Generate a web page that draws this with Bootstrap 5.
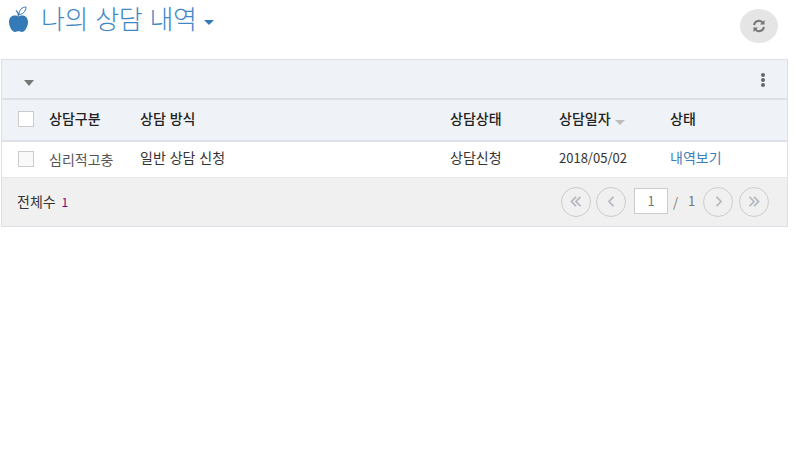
<!DOCTYPE html>
<html lang="ko">
<head>
<meta charset="UTF-8" />
<meta name="viewport" content="width=device-width, initial-scale=1.0" />
<title>나의 상담 내역</title>
<link href="https://cdn.jsdelivr.net/npm/bootstrap@5.3.3/dist/css/bootstrap.min.css" rel="stylesheet" />
<style>
body { background: #fff; font-family: "Noto Sans CJK KR", "Noto Sans", sans-serif; font-size: 14px; color: #333; }
.page-wrap { width: 788px; padding-left: 1px; }
.title-bar { height: 59px; padding-left: 8px; }
.title-text { font-size: 26px; font-weight: 300; letter-spacing: -.3px; color: #3f88c5; line-height: 36px; margin: 0 0 0 13px; }
.title-caret { width: 0; height: 0; border: 5px solid transparent; border-top-color: #337ab7; border-bottom: 0; margin: 20px 0 0 7px; }
.apple-icon { margin-top: 6px; }
.reload-btn { width: 38px; height: 34px; border-radius: 50%; background: #e5e5e5; border: 0; margin: 9px 10px 0 0; padding: 0; }
.list-box { border: 1px solid #dde1e7; }
.tool-bar { height: 40px; background: #eff3f8; border-bottom: 2px solid #dde1e7; padding: 0 21px; }
.tool-caret { width: 0; height: 0; border: 5px solid transparent; border-top: 6px solid #777; border-bottom: 0; margin-top: 8px; margin-left: 1px; }
.dots-menu { margin-right: 1px; margin-top: 2px; }
.dots-menu i { display: block; width: 4px; height: 4px; border-radius: 50%; background: #666; margin-bottom: 1px; }
.data-table { margin: 0; table-layout: fixed; width: 100%; font-size: 14px; }
.data-table th, .data-table td { padding: 0 0 4px; vertical-align: middle; border: 0; color: #333; }
.data-table th { background: #eff3f8; height: 41px; font-weight: 500; color: #222; border-bottom: 2px solid #dde1e7; }
.data-table td { height: 36px; border-bottom: 1px solid #e6e6e6; }
.data-table .check-cell { padding-bottom: 2px; }
.data-table td.check-cell { padding-bottom: 0; }
.box-check { display: block; width: 16px; height: 16px; border: 1px solid #ccc; background: #fff; margin-left: 16px; }
.data-table td .box-check { background: #f9f9f9; }
.col-check { width: 47px; }
.col-kind { width: 91px; }
.col-way { width: 310px; }
.col-state { width: 109px; }
.col-date { width: 111px; }
.sort-caret { display: inline-block; width: 0; height: 0; border: 5px solid transparent; border-top: 5px solid #bbb; border-bottom: 0; margin-left: 4px; vertical-align: -1px; }
.data-table td.kind-text { color: #555; padding-bottom: 0; }
.data-table .date-text { font-size: 13px; }
.view-link { color: #3f7fb8; text-decoration: none; }
.foot-bar { height: 48px; background: #f0f0f0; padding: 0 18px 0 15px; }
.total-num { color: #800080; margin-left: 2px; font-size: 12px; }
.page-circle { width: 30px; height: 30px; border-radius: 50%; border: 1px solid #ccc; background: #f0f0f0; padding: 0; display: flex; align-items: center; justify-content: center; margin-left: 5px; }
.page-input { width: 34px; height: 26px; border: 1px solid #ccc; background: #fff; color: #777; font-size: 13px; text-align: center; line-height: 24px; margin-left: 8px; margin-top: -1px; }
.page-sep { color: #777; font-size: 13px; margin-left: 5px; width: 15px; margin-top: 3px; }
.page-last { color: #777; font-size: 13px; margin-top: -1px; width: 15px; }
.page-last + .page-circle { margin-left: 0; }
.page-circle.last-btn { margin-left: 6px; }
</style>
</head>
<body>
<div class="page-wrap">
  <div class="title-bar d-flex">
    <svg class="apple-icon" width="19" height="26" viewBox="0 0 19 26">
      <path d="M9.500 10.500C7 8.500 0 8.800 0 16c0 5 3.500 10 6 10 1.400 0 2.300-.7 3.500-.7s2.100.7 3.500.7c2.500 0 6-5 6-10 0-7.200-7-7.500-9.500-5.500z" fill="#337ab7"/>
      <path d="M9.500 10C9.500 8 9 6 7 4.500" fill="none" stroke="#337ab7" stroke-width="1.200"/>
      <path d="M10 8.500C10 4 13 1 17 1c0 4-3 7.500-7 7.500z" fill="#fff" stroke="#337ab7" stroke-width="1"/>
    </svg>
    <h1 class="title-text">나의 상담 내역</h1>
    <span class="title-caret align-self-start"></span>
    <button class="reload-btn ms-auto d-flex align-items-center justify-content-center" type="button" aria-label="새로고침">
      <svg width="14" height="14" viewBox="0 0 14 14" fill="none" stroke="#777" stroke-width="2">
        <path d="M2 6a5 5 0 0 1 9-2"/><path d="M12 8a5 5 0 0 1-9 2"/>
        <path d="M12.500 1v4.500H8" fill="#777" stroke="none"/><path d="M1.500 13V8.500H6" fill="#777" stroke="none"/>
      </svg>
    </button>
  </div>
  <div class="list-box">
    <div class="tool-bar d-flex align-items-center justify-content-between">
      <span class="tool-caret"></span>
      <span class="dots-menu"><i></i><i></i><i></i></span>
    </div>
    <table class="table data-table">
      <thead>
        <tr>
          <th class="col-check check-cell"><span class="box-check"></span></th>
          <th class="col-kind">상담구분</th>
          <th class="col-way">상담 방식</th>
          <th class="col-state">상담상태</th>
          <th class="col-date">상담일자<span class="sort-caret"></span></th>
          <th>상태</th>
        </tr>
      </thead>
      <tbody>
        <tr>
          <td class="check-cell"><span class="box-check"></span></td>
          <td class="kind-text">심리적고충</td>
          <td>일반 상담 신청</td>
          <td>상담신청</td>
          <td class="date-text">2018/05/02</td>
          <td><a class="view-link" href="#">내역보기</a></td>
        </tr>
      </tbody>
    </table>
    <div class="foot-bar d-flex align-items-center justify-content-between">
      <span>전체수 <span class="total-num">1</span></span>
      <div class="d-flex align-items-center">
        <span class="page-circle"><svg width="12" height="11" viewBox="0 0 12 11" fill="none" stroke="#b4b8c0" stroke-width="1.800"><path d="M6 .8 1.500 5.500 6 10.200M10.500 .8 6 5.500l4.500 4.700"/></svg></span>
        <span class="page-circle"><svg width="7" height="11" viewBox="0 0 7 11" fill="none" stroke="#b4b8c0" stroke-width="1.800"><path d="M5.500 .8 1 5.500l4.500 4.700"/></svg></span>
        <span class="page-input">1</span>
        <span class="page-sep">/</span>
        <span class="page-last">1</span>
        <span class="page-circle"><svg width="7" height="11" viewBox="0 0 7 11" fill="none" stroke="#b4b8c0" stroke-width="1.800"><path d="M1.500 .8 6 5.500l-4.500 4.700"/></svg></span>
        <span class="page-circle last-btn"><svg width="12" height="11" viewBox="0 0 12 11" fill="none" stroke="#b4b8c0" stroke-width="1.800"><path d="M1.500 .8 6 5.500l-4.500 4.700M6 .8l4.500 4.700L6 10.200"/></svg></span>
      </div>
    </div>
  </div>
</div>
<script src="https://cdn.jsdelivr.net/npm/bootstrap@5.3.3/dist/js/bootstrap.bundle.min.js"></script>
</body>
</html>
